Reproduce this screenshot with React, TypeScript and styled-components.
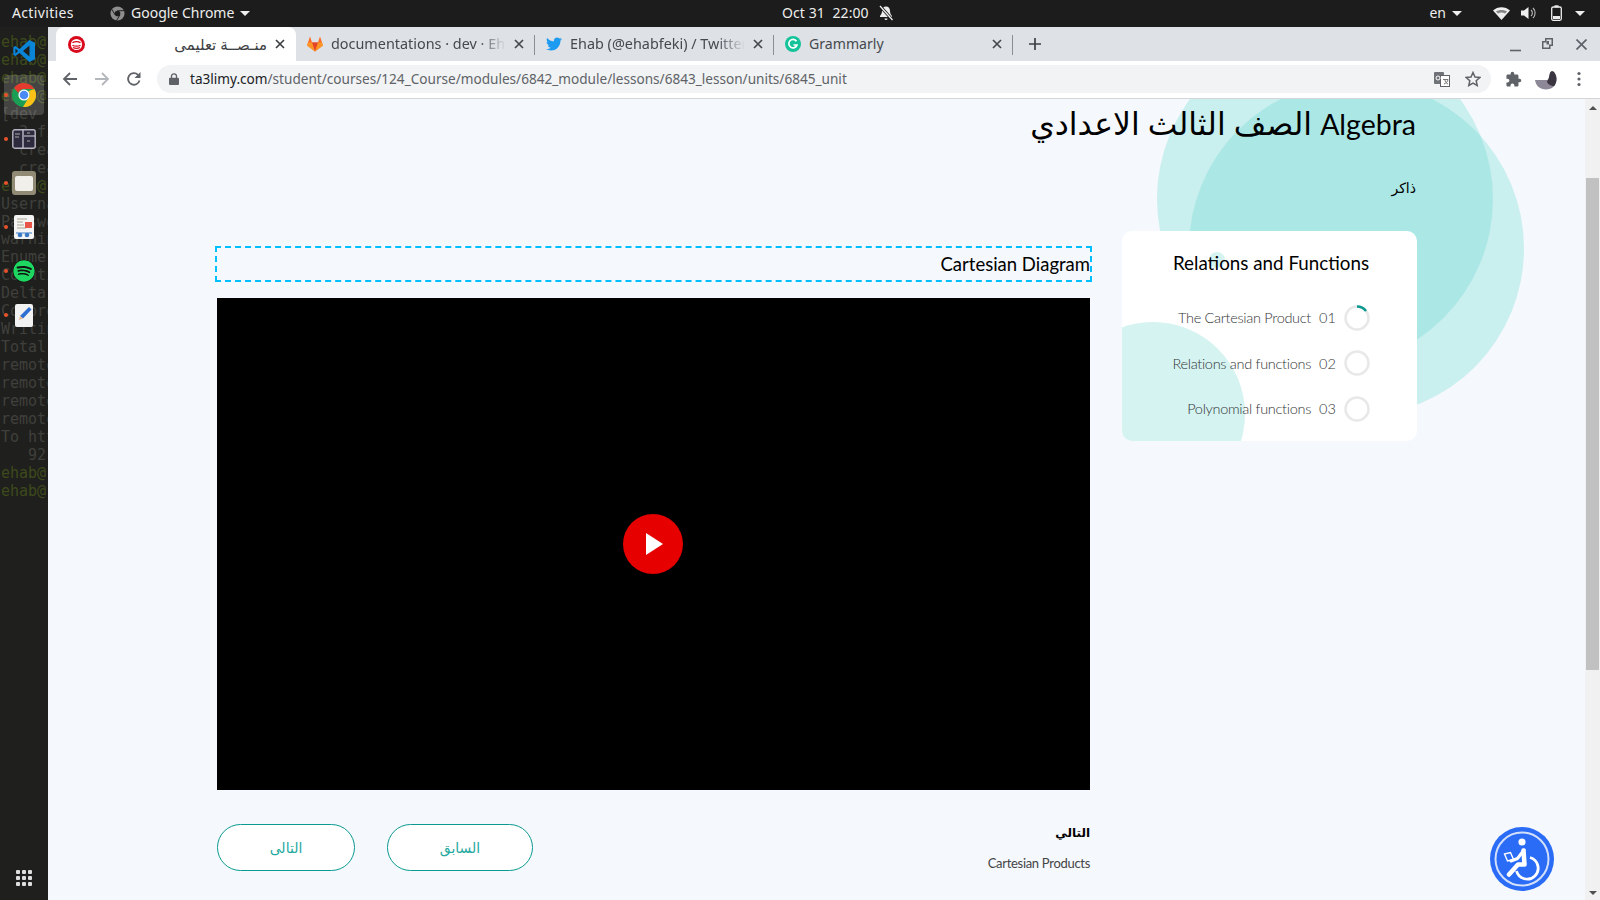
import React from "react";
import styled, { createGlobalStyle } from "styled-components";
import { FaTwitter, FaSpotify } from "react-icons/fa";
import { MdExtension } from "react-icons/md";

const Global = createGlobalStyle`
  html, body { margin: 0; padding: 0; width: 1600px; height: 900px; overflow: hidden; background: #1c1c1c; }
  * { box-sizing: border-box; }
  #root { width: 1600px; height: 900px; }
`;

const Screen = styled.div`
  width: 1600px; height: 900px; display: flex; flex-direction: column;
  font-family: "Noto Sans", "DejaVu Sans", sans-serif;
`;
const TopBar = styled.header`
  height: 27px; flex: none; background: #1c1c1c; color: #eeeeec; font-size: 14px; line-height: 24px;
  display: grid; grid-template-columns: 770px auto 1fr; align-items: center; padding: 0 15px 1px 12px;
`;
const BarGroup = styled.div<{ $end?: boolean }>`
  display: flex; align-items: center; justify-content: ${p => (p.$end ? "flex-end" : "flex-start")};
`;
const Activities = styled.span` width: 98px; letter-spacing: .35px; `;
const AppLabel = styled.span` margin-left: 6px; margin-right: 6px; `;
const Caret = styled.i<{ $gap?: number }>`
  width: 0; height: 0; border-left: 5px solid transparent; border-right: 5px solid transparent;
  border-top: 5px solid #eeeeec; margin-left: ${p => p.$gap ?? 0}px;
`;
const Clock = styled.span` display: flex; align-items: center; gap: 9px; letter-spacing: .1px; `;
const Desktop = styled.div` flex: 1; display: flex; min-height: 0; `;
const Dock = styled.nav`
  position: relative; width: 48px; flex: none; background: #1f1f1d; overflow: hidden;
  display: flex; flex-direction: column; padding-top: 2px;
`;
const TerminalText = styled.pre`
  position: absolute; left: 1px; top: 7px; margin: 0; font: 15px/17.95px "DejaVu Sans Mono", monospace; color: #3f403c;
`;
const Prompt = styled.span` color: #3d4a1b; `;
const DockItem = styled.div<{ $active?: boolean }>`
  position: relative; height: 44px; flex: none; display: flex; align-items: center; justify-content: center;
  &::before {
    content: ""; position: absolute; left: 4px; right: 4px; top: 2px; bottom: 2px; border-radius: 4px;
    background: ${p => (p.$active ? "rgba(255,255,255,.17)" : "transparent")};
  }
  & > * { position: relative; }
`;
const RunDot = styled.i`
  position: absolute !important; left: 4px; top: 20px; width: 4px; height: 4px; border-radius: 50%; background: #e9532b;
`;
const AppGrid = styled.div`
  margin: auto auto 14px; display: grid; grid-template-columns: repeat(3, 4px); gap: 2px; position: relative;
`;
const GridDot = styled.i` width: 4px; height: 4px; background: #dedede; border-radius: 1px; `;
const Browser = styled.main` flex: 1; min-width: 0; display: flex; flex-direction: column; `;
const TabStrip = styled.div`
  height: 34px; flex: none; background: #dee1e6; display: flex; align-items: stretch; padding-left: 8px;
`;
const Tab = styled.div<{ $active?: boolean }>`
  width: ${p => (p.$active ? 240 : 239)}px; flex: none; display: flex; align-items: center; gap: 8px;
  padding: 0 11px 0 ${p => (p.$active ? 12 : 11)}px; color: ${p => (p.$active ? "#3c4043" : "#45494e")};
  background: ${p => (p.$active ? "#fff" : "transparent")}; border-radius: 8px 8px 0 0; position: relative;
`;
const TabSep = styled.i`
  position: absolute; right: 0; top: 8px; bottom: 6px; width: 1px; background: #8a8d91;
`;
const TabTitle = styled.span<{ $rtl?: boolean }>`
  flex: 1; min-width: 0; overflow: hidden; white-space: nowrap; line-height: 18px; margin-top: -1px;
  ${p => p.$rtl ? `direction: rtl; text-align: right; font-size: 15px;` : `
    font-size: 14.4px;
    -webkit-mask-image: linear-gradient(90deg, #000 84%, transparent 100%);
    mask-image: linear-gradient(90deg, #000 84%, transparent 100%);`}
`;
const PlainTitle = styled.span` flex: 1; white-space: nowrap; font-size: 14.1px; line-height: 18px; margin-top: -1px; `;
const NewTab = styled.div` width: 44px; display: flex; align-items: center; justify-content: center; `;
const WindowButtons = styled.div`
  margin-left: auto; display: flex; align-items: center; padding-right: 13px; gap: 15px;
`;
const Toolbar = styled.div`
  height: 38px; flex: none; background: #fff; border-bottom: 1px solid #d3d5d8; display: flex; align-items: flex-start;
  padding: 4px 0 0 14px;
`;
const NavIcons = styled.div` width: 95px; display: flex; gap: 16px; align-items: center; height: 28px; flex: none; `;
const Omnibox = styled.div`
  width: 1334px; height: 28px; flex: none; border-radius: 14px; background: #f1f3f4; display: flex; align-items: center;
  padding: 0 10px 0 12px; color: #5f6368; font-size: 13.6px;
`;
const UrlText = styled.span` margin-left: 11px; margin-top: -2px; white-space: nowrap; `;
const Host = styled.span` color: #202124; `;
const OmniEnd = styled.span` margin-left: auto; display: flex; align-items: center; gap: 15px; `;
const ToolEnd = styled.div` display: flex; align-items: center; height: 28px; margin-left: 14px; gap: 11px; `;
const Viewport = styled.div` flex: 1; min-height: 0; display: flex; background: #f5f8fd; `;
const Page = styled.div`
  position: relative; flex: 1; min-width: 0; overflow: hidden; padding: 0 169px; color: #000;
  font-family: Lato, "DejaVu Sans", sans-serif;
`;
const Blob = styled.i<{ $left: number; $top: number; $size: number }>`
  position: absolute; left: ${p => p.$left}px; top: ${p => p.$top}px; width: ${p => p.$size}px; height: ${p => p.$size}px;
  border-radius: 50%; background: rgba(90, 215, 205, .27);
`;
const Heading = styled.h1`
  position: relative; margin: 0; height: 49px; font-size: 31.5px; line-height: 49px; font-weight: 400; text-align: right; direction: rtl;
`;
const HeadingLatin = styled.span` font-size: 28.5px; `;
const Sub = styled.p`
  position: relative; margin: 28px 0 0; height: 24px; font-size: 14px; line-height: 24px; text-align: right; direction: rtl;
`;
const Columns = styled.div`
  position: relative; display: grid; grid-template-columns: 873px 295px; gap: 32px; margin-top: 31px; align-items: start;
`;
const MainCol = styled.section` padding-top: 15px; `;
const LessonTitle = styled.div`
  margin: 0 -2px; height: 36px; border: 2px dashed #00bfff; text-align: right; font-size: 18.5px; line-height: 32px;
`;
const Video = styled.div`
  margin-top: 16px; height: 492px; background: #000; display: flex; align-items: center; justify-content: center;
`;
const Play = styled.div`
  width: 60px; height: 60px; margin-right: 2px; border-radius: 50%; background: #e60000; display: flex; align-items: center; justify-content: center;
`;
const Triangle = styled.i`
  width: 0; height: 0; border-left: 17px solid #fff; border-top: 11px solid transparent; border-bottom: 11px solid transparent; margin-left: 4px;
`;
const Footer = styled.div` margin-top: 34px; display: flex; align-items: flex-start; justify-content: space-between; `;
const Buttons = styled.div` display: flex; gap: 32px; `;
const Pill = styled.button<{ $w: number }>`
  width: ${p => p.$w}px; height: 47px; border-radius: 24px; border: 1px solid #0a9a90; background: #fff; color: #1fa9a0;
  font: 14px Lato, "DejaVu Sans", sans-serif; padding: 0;
`;
const NextInfo = styled.div` text-align: right; `;
const NextLabel = styled.div` font-size: 12px; font-weight: 700; line-height: 20px; margin-top: -1px; `;
const NextName = styled.div` font-size: 13px; line-height: 20px; margin-top: 10px; color: #444; letter-spacing: -.3px; `;
const Card = styled.aside`
  position: relative; height: 210px; border-radius: 10px; background: #fff; overflow: hidden; padding-top: 20px;
`;
const CardBlob = styled.i<{ $left: number; $top: number; $size: number }>`
  position: absolute; left: ${p => p.$left}px; top: ${p => p.$top}px; width: ${p => p.$size}px; height: ${p => p.$size}px;
  border-radius: 50%; background: #d5f3f0;
`;
const CardTitle = styled.h2`
  position: relative; margin: 0 0 20px; font-size: 18.8px; line-height: 24px; font-weight: 400; text-align: center; padding-left: 3px;
`;
const Row = styled.div`
  position: relative; height: 45.5px; display: flex; align-items: center; justify-content: flex-end; padding-right: 47px; color: #333638; font-size: 14.5px; font-weight: 300;
`;
const RowName = styled.span` white-space: nowrap; letter-spacing: -.3px; `;
const RowNum = styled.span` width: 17px; margin: 0 8px 0 8px; `;
const Ring = styled.svg` width: 26px; height: 26px; flex: none; `;
const Scrollbar = styled.div`
  width: 15px; flex: none; background: #f1f1f1; display: flex; flex-direction: column; align-items: center; padding-top: 7px; position: relative;
`;
const ScrollArrow = styled.i<{ $down?: boolean }>`
  width: 0; height: 0; border-left: 4px solid transparent; border-right: 4px solid transparent;
  ${p => p.$down ? `border-top: 4px solid #505050; margin-top: auto; margin-bottom: 5px;` : `border-bottom: 4px solid #505050;`}
`;
const Thumb = styled.div`
  width: 13px; height: 492px; margin-top: 68px; background: #c1c1c1;
`;
const A11y = styled.div`
  position: absolute; left: 1442px; top: 728px; width: 64px; height: 64px; border-radius: 50%; background: #2a6cf6;
  display: flex; align-items: center; justify-content: center;
`;

const terminal: [string, boolean][] = [
  ["ehab@", true], ["ehab@", true], ["ehab@", true], ["ehab@", true], ["[dev", false], ["  3 fi", false], ["  crea", false],
  ["  crea", false], ["ehab@", true], ["Userna", false], ["Passwo", false], ["warnin", false], ["Enumer", false], ["Counti", false],
  ["Delta", false], ["Compre", false], ["Writin", false], ["Total", false], ["remote", false], ["remote", false], ["remote", false],
  ["remote", false], ["To htt", false], ["   92", false], ["ehab@", true], ["ehab@", true],
];

const X = ({ c = "#45494e" }: { c?: string }) => (
  <svg width="10" height="10" viewBox="0 0 10 10" style={{ flex: "none" }}><path d="M1 1l8 8M9 1L1 9" stroke={c} strokeWidth="1.7" /></svg>
);

const ChromeLogo = ({ size }: { size: number }) => (
  <svg width={size} height={size} viewBox="0 0 24 24">
    <circle cx="12" cy="12" r="12" fill="#1a9e54" />
    <path d="M12 0a12 12 0 0 1 10.4 6H12a6 6 0 0 0-5.6 3.9L2 5A12 12 0 0 1 12 0z" fill="#e33b2e" />
    <path d="M22.4 6A12 12 0 0 1 11 24l5.2-8.8A6 6 0 0 0 16.5 8z" fill="#fbc116" />
    <circle cx="12" cy="12" r="5.6" fill="#fff" /><circle cx="12" cy="12" r="4.3" fill="#4a8af4" />
  </svg>
);

export default function App() {
  return (
    <Screen>
      <Global />
      <TopBar>
        <BarGroup>
          <Activities>Activities</Activities>
          <svg width="15" height="15" viewBox="0 0 16 16"><circle cx="8" cy="8" r="7.5" fill="#8e8e8e" /><circle cx="8" cy="8" r="3" fill="#1c1c1c" /><path d="M8 5h7M5.4 9.5L2 3.5M10.6 9.5L7 15.5" stroke="#1c1c1c" strokeWidth="1" /></svg>
          <AppLabel>Google Chrome</AppLabel>
          <Caret />
        </BarGroup>
        <Clock>
          <span>Oct 31&nbsp;&nbsp;22:00</span>
          <svg width="16" height="16" viewBox="0 0 16 16"><path d="M8 1.5c-2.6 0-4 2-4 4.500 0 3-1.500 4-2 5v1h12v-1c-.5-1-2-2-2-5 0-2.500-1.400-4.500-4-4.500zM6.500 13.500h3a1.500 1.500 0 0 1-3 0z" fill="#eee" /><path d="M2 1l12.500 14" stroke="#1c1c1c" strokeWidth="3" /><path d="M2 1l12.500 14" stroke="#eee" strokeWidth="1.300" /></svg>
        </Clock>
        <BarGroup $end>
          <span>en</span>
          <Caret $gap={6} />
          <svg style={{ marginLeft: 31 }} width="17" height="13" viewBox="0 0 17 13"><path d="M0 3.500C4.500-1 12.500-1 17 3.500L8.500 13z" fill="#eee" /><path d="M3 4.500c3-2 8-2 11 0l-2 2c-2-1.200-5-1.200-7 0z" fill="#1c1c1c" opacity=".5" /></svg>
          <svg style={{ marginLeft: 11 }} width="16" height="14" viewBox="0 0 16 14"><path d="M0 4.500h3L7.500 1v12L3 9.500H0z" fill="#eee" /><path d="M10 4a4 4 0 0 1 0 6M12 2a7 7 0 0 1 0 10" fill="none" stroke="#bbb" strokeWidth="1.100" /></svg>
          <svg style={{ marginLeft: 14 }} width="11" height="16" viewBox="0 0 11 16"><rect x=".7" y="2" width="9.600" height="13.300" rx="1.500" fill="none" stroke="#eee" strokeWidth="1.300" /><rect x="3.500" y=".3" width="4" height="2" fill="#eee" /><rect x="2" y="11" width="7" height="3" fill="#eee" /></svg>
          <Caret $gap={13} />
        </BarGroup>
      </TopBar>
      <Desktop>
        <Dock>
          <TerminalText>{terminal.map(([t, p], i) => <React.Fragment key={i}>{p ? <Prompt>{t}</Prompt> : t}{"\n"}</React.Fragment>)}</TerminalText>
          <DockItem>
            <svg width="24" height="24" viewBox="0 0 24 24"><path fillRule="evenodd" d="M17.300 1L23 3.700v16.600L17.300 23 7.500 14l-4 3L1.300 16V8l2.200-1 4 3zM17.500 6.500L11 12l6.500 5.500zM3.500 9.500v5L6 12z" fill="#0a84d6" /></svg>
          </DockItem>
          <DockItem $active><RunDot /><ChromeLogo size={24} /></DockItem>
          <DockItem><RunDot />
            <svg width="24" height="20" viewBox="0 0 24 20"><rect x=".8" y=".8" width="22.400" height="18.400" rx="2" fill="#2c2a3c" stroke="#b7b5c4" strokeWidth="1.400" /><path d="M11 1v18M12 7h11" stroke="#d5d3de" strokeWidth="1.200" /><path d="M3 5h5M3 8h4M15 4h3M15 12h3" stroke="#aaa" /></svg>
          </DockItem>
          <DockItem><RunDot />
            <svg width="24" height="24" viewBox="0 0 24 24"><rect x="0" y="0" width="24" height="24" rx="3" fill="#918a75" /><rect x="3" y="5" width="18" height="15" rx="2" fill="#f0efe9" /></svg>
          </DockItem>
          <DockItem><RunDot />
            <svg width="20" height="24" viewBox="0 0 20 24"><rect width="20" height="24" rx="2" fill="#f3f3f3" /><path d="M3 4h10M3 7h6M3 10h7M3 13h9" stroke="#b0a58f" strokeWidth="1.200" /><rect x="11" y="7" width="7" height="6" fill="#e8564a" /><path d="M2 18h16" stroke="#3b79c4" strokeWidth="1" /><circle cx="6" cy="20" r="2.300" fill="#3b79c4" /><circle cx="13" cy="20" r="2.300" fill="#3b79c4" /></svg>
          </DockItem>
          <DockItem><RunDot /><FaSpotify size={22} color="#1ed760" style={{ background: "#111", borderRadius: "50%" }} /></DockItem>
          <DockItem><RunDot />
            <svg width="18" height="23" viewBox="0 0 18 23"><rect width="18" height="23" rx="2" fill="#f2f2f2" /><path d="M14 3l2.500 2.500-8.500 9L5 12z" fill="#2f6fd0" /><path d="M5 12l3 2.500-4 1.500z" fill="#e7b98e" /></svg>
          </DockItem>
          <AppGrid>{Array.from({ length: 9 }, (_, i) => <GridDot key={i} />)}</AppGrid>
        </Dock>
        <Browser>
          <TabStrip>
            <Tab $active>
              <svg width="17" height="17" viewBox="0 0 17 17" style={{ flex: "none" }}><circle cx="8.500" cy="8.500" r="8.500" fill="#d9091b" /><circle cx="8.500" cy="8.500" r="5.600" fill="#fff" /><path d="M4.500 6.800c2-1.500 6-1.500 8 0M4.500 9.200c2 1.300 6 1.300 8 0M5 11.500c2 1 5 1 7 0" fill="none" stroke="#d9091b" strokeWidth="1.300" /></svg>
              <TabTitle $rtl>منـصــة تعليمى</TabTitle>
              <X c="#3c4043" />
            </Tab>
            <Tab>
              <svg width="16" height="16" viewBox="0 0 16 15" style={{ flex: "none" }}><path d="M8 15L0 9l1-3L3 0l2 6h6l2-6 2 6 1 3z" fill="#fc6d26" /><path d="M8 15L5 6h6z" fill="#e24329" /><path d="M8 15L0 9l1-3h4zM8 15l8-6-1-3h-4z" fill="#fca326" opacity=".75" /></svg>
              <TabTitle>documentations · dev · Eh</TabTitle>
              <X /><TabSep />
            </Tab>
            <Tab>
              <FaTwitter size={16} color="#1d9bf0" style={{ flex: "none" }} />
              <TabTitle>Ehab (@ehabfeki) / Twitter</TabTitle>
              <X /><TabSep />
            </Tab>
            <Tab>
              <svg width="16" height="16" viewBox="0 0 16 16" style={{ flex: "none" }}><circle cx="8" cy="8" r="8" fill="#15c39a" /><path d="M11.500 5.300A4.200 4.200 0 1 0 12 9H8.500" fill="none" stroke="#fff" strokeWidth="1.700" /></svg>
              <PlainTitle>Grammarly</PlainTitle>
              <X /><TabSep />
            </Tab>
            <NewTab><svg width="12" height="12" viewBox="0 0 12 12"><path d="M6 0v12M0 6h12" stroke="#3c4043" strokeWidth="1.700" /></svg></NewTab>
            <WindowButtons>
              <svg width="11" height="11" viewBox="0 0 11 11" style={{ marginTop: 6 }}><path d="M0 8.500h11" stroke="#5f6368" strokeWidth="1.600" /></svg>
              <svg width="11" height="11" viewBox="0 0 11 11" style={{ margin: "-2px 4px 0 6px" }}><path d="M3 0h8v8H8.500v3H0V3h3z" fill="#5f6368" /><rect x="1.500" y="4.500" width="5.500" height="5" fill="#dee1e6" /><rect x="4.500" y="1.500" width="5" height="5" fill="#dee1e6" /><rect x="4.500" y="3" width="2.500" height="3.500" fill="#5f6368" /></svg>
              <svg width="11" height="11" viewBox="0 0 11 11" style={{ marginLeft: 4 }}><path d="M.5.500l10 10M10.500.500l-10 10" stroke="#5f6368" strokeWidth="1.700" /></svg>
            </WindowButtons>
          </TabStrip>
          <Toolbar>
            <NavIcons>
              <svg width="16" height="16" viewBox="0 0 16 16"><path d="M15 8H2M8 2L2 8l6 6" fill="none" stroke="#5f6368" strokeWidth="1.800" /></svg>
              <svg width="16" height="16" viewBox="0 0 16 16"><path d="M1 8h13M8 2l6 6-6 6" fill="none" stroke="#b4b7bb" strokeWidth="1.800" /></svg>
              <svg width="16" height="16" viewBox="0 0 16 16"><path d="M13.500 9.500A5.800 5.800 0 1 1 12 3.800" fill="none" stroke="#5f6368" strokeWidth="1.800" /><path d="M14.500 1v6h-6z" fill="#5f6368" /></svg>
            </NavIcons>
            <Omnibox>
              <svg width="10" height="12" viewBox="0 0 10 12" style={{ flex: "none" }}><path d="M2.500 5V3.300a2.500 2.500 0 0 1 5 0V5" fill="none" stroke="#5f6368" strokeWidth="1.300" /><rect y="4.800" width="10" height="7.200" rx="1" fill="#5f6368" /></svg>
              <UrlText><Host>ta3limy.com</Host>/student/courses/124_Course/modules/6842_module/lessons/6843_lesson/units/6845_unit</UrlText>
              <OmniEnd>
                <svg width="16" height="15" viewBox="0 0 16 15"><rect width="10" height="12" rx="1" fill="#6f7377" /><rect x="6.500" y="3.500" width="9" height="11" fill="#fff" stroke="#5f6368" /><circle cx="4" cy="6" r="2" fill="none" stroke="#fff" /><path d="M9 7.500h5M11 7.500c0 2.500 1 3.500 3 4.500M14 7.500c-.3 2-1.500 3.500-4 4.500" stroke="#777" fill="none" /></svg>
                <svg width="16" height="16" viewBox="0 0 16 16"><path d="M8 1.500l2 4.500 4.800.5-3.600 3.200 1 4.800L8 12.100l-4.200 2.400 1-4.800L1.200 6.500 6 6z" fill="none" stroke="#5f6368" strokeWidth="1.500" /></svg>
              </OmniEnd>
            </Omnibox>
            <ToolEnd>
              <MdExtension size={17} color="#5f6368" />
              <svg width="22" height="22" viewBox="0 0 22 22" style={{ marginLeft: 2 }}>
                <path d="M0 12h12c2.500-.5 2-4 3-7 .5-2 3-2.500 4-1 1 1.800 2.500 3.500 2.500 7 0 6.500-4.500 10.500-10.500 10.500S1 18 0 12z" fill="#8c8897" />
                <path d="M12 13c2-1 2-5 3-8 .5-2 3-2.500 4-1 1 1.800 2.500 3.500 2.500 7 0 3-1 5.500-2.500 7.300C15 17.500 12 16 12 13z" fill="#3b3542" />
              </svg>
              <svg width="4" height="16" viewBox="0 0 4 16" style={{ marginLeft: 9 }}><circle cx="2" cy="2.500" r="1.600" fill="#5f6368" /><circle cx="2" cy="8" r="1.600" fill="#5f6368" /><circle cx="2" cy="13.500" r="1.600" fill="#5f6368" /></svg>
            </ToolEnd>
          </Toolbar>
          <Viewport>
            <Page>
              <Blob $left={1109} $top={-68} $size={336} />
              <Blob $left={1141} $top={-18} $size={335} />
              <Heading><HeadingLatin>Algebra</HeadingLatin> الصف الثالث الاعدادي</Heading>
              <Sub>ذاكر</Sub>
              <Columns>
                <MainCol>
                  <LessonTitle>Cartesian Diagram</LessonTitle>
                  <Video><Play><Triangle /></Play></Video>
                  <Footer>
                    <Buttons>
                      <Pill $w={138}>التالى</Pill>
                      <Pill $w={146}>السابق</Pill>
                    </Buttons>
                    <NextInfo>
                      <NextLabel>التالي</NextLabel>
                      <NextName>Cartesian Products</NextName>
                    </NextInfo>
                  </Footer>
                </MainCol>
                <Card>
                  <CardBlob $left={-61} $top={91} $size={184} />
                  <CardBlob $left={87} $top={21} $size={16} />
                  <CardTitle>Relations and Functions</CardTitle>
                  {[["The Cartesian Product", "01"], ["Relations and functions", "02"], ["Polynomial functions", "03"]].map(([n, k], i) => (
                    <Row key={k}>
                      <RowName>{n}</RowName>
                      <RowNum>{k}</RowNum>
                      <Ring viewBox="0 0 26 26">
                        <circle cx="13" cy="13" r="11.500" fill="none" stroke="#e8e8e8" strokeWidth="2.500" />
                        {i === 0 && <path d="M13 1.500A11.500 11.500 0 0 1 22 6" fill="none" stroke="#0a9a90" strokeWidth="2.500" />}
                      </Ring>
                    </Row>
                  ))}
                </Card>
              </Columns>
              <A11y>
                <svg width="58" height="58" viewBox="0 0 58 58">
                  <circle cx="29" cy="29" r="26.500" fill="none" stroke="#d3e0fb" strokeWidth="2" />
                  <circle cx="29" cy="12" r="3.600" fill="#fff" />
                  <path d="M30.500 20.500L31.500 34.500H25L16 44.500" fill="none" stroke="#fff" strokeWidth="4.500" strokeLinejoin="round" strokeLinecap="round" />
                  <path d="M31 20L24.500 28.500 18 31" fill="none" stroke="#fff" strokeWidth="3" strokeLinejoin="round" strokeLinecap="round" />
                  <path d="M11.500 24l6-1.500 3 7-6 1.500z" fill="none" stroke="#fff" strokeWidth="1.400" />
                  <path d="M37 27.500A11 11 0 1 1 23.500 41" fill="none" stroke="#fff" strokeWidth="2.800" />
                </svg>
              </A11y>
            </Page>
            <Scrollbar>
              <ScrollArrow />
              <Thumb />
              <ScrollArrow $down />
            </Scrollbar>
          </Viewport>
        </Browser>
      </Desktop>
    </Screen>
  );
}
